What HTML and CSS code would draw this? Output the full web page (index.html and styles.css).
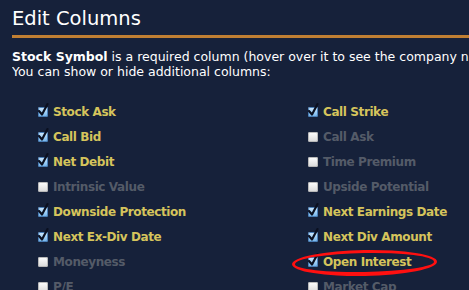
FILE: index.html
```html
<!DOCTYPE html>
<html lang="en">
<head>
  <meta charset="UTF-8">
  <title>Edit Columns</title>
  <link rel="stylesheet" href="styles.css">
</head>
<body>
  <div class="page">
    <h1 class="title">Edit Columns</h1>
    <p class="intro">
      <b>Stock Symbol</b> is a required column (hover over it to see the company name).<br>
      You can show or hide additional columns:
    </p>

    <div class="columns">
      <div class="col">
        <div class="opt on"><span class="box"><svg viewBox="0 0 12 14"><path d="M2 8 L5 11.5 L10.5 1" /></svg></span>Stock Ask</div>
        <div class="opt on"><span class="box"><svg viewBox="0 0 12 14"><path d="M2 8 L5 11.5 L10.5 1" /></svg></span>Call Bid</div>
        <div class="opt on"><span class="box"><svg viewBox="0 0 12 14"><path d="M2 8 L5 11.5 L10.5 1" /></svg></span>Net Debit</div>
        <div class="opt"><span class="box"></span>Intrinsic Value</div>
        <div class="opt on"><span class="box"><svg viewBox="0 0 12 14"><path d="M2 8 L5 11.5 L10.5 1" /></svg></span>Downside Protection</div>
        <div class="opt on"><span class="box"><svg viewBox="0 0 12 14"><path d="M2 8 L5 11.5 L10.5 1" /></svg></span>Next Ex-Div Date</div>
        <div class="opt"><span class="box"></span>Moneyness</div>
        <div class="opt"><span class="box"></span>P/E</div>
      </div>
      <div class="col">
        <div class="opt on"><span class="box"><svg viewBox="0 0 12 14"><path d="M2 8 L5 11.5 L10.5 1" /></svg></span>Call Strike</div>
        <div class="opt"><span class="box"></span>Call Ask</div>
        <div class="opt"><span class="box"></span>Time Premium</div>
        <div class="opt"><span class="box"></span>Upside Potential</div>
        <div class="opt on"><span class="box"><svg viewBox="0 0 12 14"><path d="M2 8 L5 11.5 L10.5 1" /></svg></span>Next Earnings Date</div>
        <div class="opt on"><span class="box"><svg viewBox="0 0 12 14"><path d="M2 8 L5 11.5 L10.5 1" /></svg></span>Next Div Amount</div>
        <div class="opt on circled"><span class="box"><svg viewBox="0 0 12 14"><path d="M2 8 L5 11.5 L10.5 1" /></svg></span>Open Interest<span class="ring"></span></div>
        <div class="opt"><span class="box"></span>Market Cap</div>
      </div>
    </div>
  </div>
</body>
</html>
```

FILE: styles.css
```css
:root {
  --bg: #16213a;
  --rule: #c07f33;
  --label: #d5c45c;
  --muted: #545b68;
}

html, body {
  margin: 0;
  padding: 0;
  background: var(--bg);
  height: 100%;
  overflow: hidden;
}

.page {
  padding: 7px 0 0 12px;
  font-family: "DejaVu Sans", "Liberation Sans", sans-serif;
  color: #fff;
}

.title {
  margin: 0;
  font-size: 19.5px;
  font-weight: normal;
  line-height: 24px;
  padding-bottom: 4px;
  border-bottom: 3px solid var(--rule);
}

.intro {
  margin: 11px 0 0;
  font-size: 12.5px;
  line-height: 15px;
  white-space: nowrap;
  overflow: hidden;
}

.columns {
  display: grid;
  grid-template-columns: 270px 170px;
  margin: 20px 0 0 26px;
}

.opt {
  position: relative;
  display: flex;
  align-items: center;
  height: 25px;
  font-size: 12px;
  font-weight: bold;
  letter-spacing: -0.4px;
  color: var(--muted);
  white-space: nowrap;
}

.opt.on {
  color: var(--label);
}

.box {
  position: relative;
  flex: none;
  width: 10px;
  height: 10px;
  margin-right: 5px;
  border-radius: 2px;
  background: linear-gradient(#ffffff, #d8d8d8);
  box-shadow: inset 0 0 0 1px #b8b8b8;
}

.on .box {
  background: linear-gradient(#d4ecff, #6fb2ea);
  box-shadow: inset 0 0 0 1px #4a7fb8;
}

.box svg {
  position: absolute;
  left: -1px;
  top: -4px;
  width: 12px;
  height: 14px;
  fill: none;
  stroke: #0b1020;
  stroke-width: 2.2;
  stroke-linecap: round;
  stroke-linejoin: round;
}

.ring {
  position: absolute;
  left: -16px;
  top: 1px;
  width: 145px;
  height: 26px;
  box-sizing: border-box;
  border: 3px solid #ff1010;
  border-bottom-width: 4px;
  border-radius: 50%;
  transform: rotate(-1deg);
}
```
